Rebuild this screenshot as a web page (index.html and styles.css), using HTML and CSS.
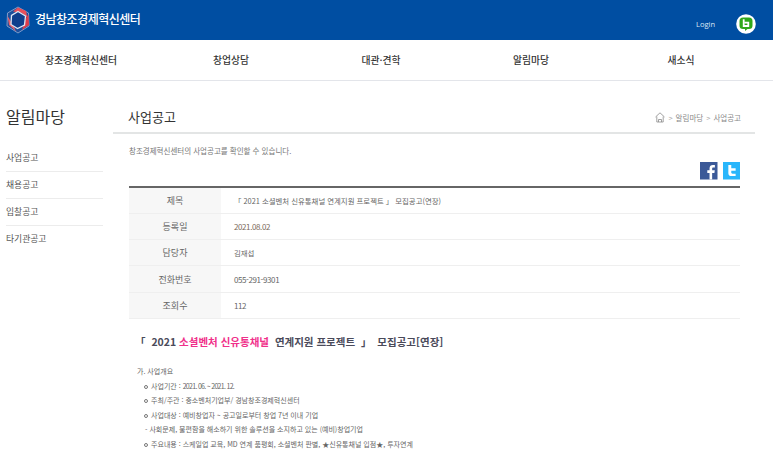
FILE: index.html
```html
<!DOCTYPE html>
<html lang="ko">
<head>
<meta charset="utf-8">
<title>사업공고</title>
<link rel="stylesheet" href="styles.css">
</head>
<body>
<header class="topbar">
  <a class="logo">
    <svg class="logo-mark" width="24" height="28" viewBox="0 0 24 28">
      <path d="M12 1 22.500 7 23 20 12 27 1 20 1.500 7Z" fill="#1b4f9c" stroke="#7f9ccb" stroke-width="1"/>
      <path d="M12 1.500 20 5 21.500 12 16 7 7 5.500Z" fill="#e8505b"/>
      <path d="M22.500 8 23 19 16 24 17.500 19 19.500 13Z" fill="#dc3c4a"/>
      <path d="M1.500 10 3 19 10 25.500 8 21 4 14Z" fill="#e8606a"/>
      <path d="M12 5.500 19.500 10 18.500 19 11.500 22.500 5 18.500 5.500 9.500Z" fill="#0f3f8c" stroke="#dfe6f4" stroke-width="1.300"/>
    </svg>
    <span class="logo-text">경남창조경제혁신센터</span>
  </a>
  <div class="top-right">
    <span class="login">Login</span>
    <svg class="band" width="20" height="20" viewBox="0 0 20 20">
      <circle cx="10" cy="10" r="9.800" fill="#fff"/>
      <path d="M7 3.500H13A3.500 3.500 0 0 1 16.500 7V11.500A3.500 3.500 0 0 1 13 15H11.500L9 17V15H7A3.500 3.500 0 0 1 3.500 11.500V7A3.500 3.500 0 0 1 7 3.500Z" fill="#2fa81a"/>
      <path d="M7.700 5.300V12H12.300V8.600H8.700" fill="none" stroke="#fff" stroke-width="1.800"/>
    </svg>
  </div>
</header>

<nav class="gnb">
  <a>창조경제혁신센터</a>
  <a>창업상담</a>
  <a>대관·견학</a>
  <a>알림마당</a>
  <a>새소식</a>
</nav>

<div class="wrap">
  <aside class="side">
    <h2 class="side-title">알림마당</h2>
    <ul class="side-menu">
      <li>사업공고</li>
      <li>채용공고</li>
      <li>입찰공고</li>
      <li>타기관공고</li>
    </ul>
  </aside>

  <main class="main">
    <div class="page-head">
      <h1>사업공고</h1>
      <div class="crumb">
        <svg width="10" height="11" viewBox="0 0 10 11"><path d="M.5 5 5 .8 9.500 5M1.800 4.500V10H8.200V4.500M3.500 10V7.500H6.500V10" fill="none" stroke="#8a8a8a" stroke-width=".8"/></svg>
        <span class="sep">&gt;</span><span>알림마당</span><span class="sep">&gt;</span><span>사업공고</span>
      </div>
    </div>

    <div class="content">
      <p class="intro">창조경제혁신센터의 사업공고를 확인할 수 있습니다.</p>
      <div class="share">
        <svg width="18" height="18" viewBox="0 0 18 18"><rect width="18" height="18" fill="#3b5998"/><path d="M12.500 18V11.200H14.800L15.200 8.500H12.500V6.900C12.500 6.100 12.800 5.600 13.900 5.600H15.300V3.200C14.800 3.100 14.200 3.100 13.300 3.100 11.200 3.100 9.800 4.300 9.800 6.600V8.500H7.500V11.200H9.800V18Z" fill="#fff"/></svg>
        <svg width="18" height="18" viewBox="0 0 18 18"><rect width="18" height="18" fill="#29b6fb"/><path d="M5.500 3H8.500V6.500H13V9H8.500V10.800C8.500 11.600 9 12 9.800 12H13V14.500H9C6.800 14.500 5.500 13.400 5.500 11.500Z" fill="#fff"/></svg>
      </div>

      <table class="info">
        <tr><th>제목</th><td>「 2021 소셜벤처 신유통채널 연계지원 프로젝트 」 모집공고(연장)</td></tr>
        <tr><th>등록일</th><td class="date"><span class="num">2021.08.02</span></td></tr>
        <tr><th>담당자</th><td>김재섭</td></tr>
        <tr><th>전화번호</th><td><span class="num">055-291-9301</span></td></tr>
        <tr><th>조회수</th><td><span class="num">112</span></td></tr>
      </table>

      <h3 class="notice-title">「&nbsp; 2021 <em>소셜벤처 신유통채널</em>&nbsp; 연계지원 프로젝트&nbsp; 」&nbsp; 모집공고[연장]</h3>

      <div class="notice-body">
        <p>가. 사업개요</p>
        <p class="in"><span class="bul"></span>사업기간 : <span class="tight">2021. 06. ~ 2021. 12.</span></p>
        <p class="in"><span class="bul"></span>주최/주관 : 중소벤처기업부/ 경남창조경제혁신센터</p>
        <p class="in"><span class="bul"></span>사업대상 : 예비창업자 ~ 공고일로부터 창업 7년 이내 기업</p>
        <p class="in dash">- 사회문제, 불편함을 해소하기 위한 솔루션을 소지하고 있는 (예비)창업기업</p>
        <p class="in"><span class="bul"></span>주요내용 : 스케일업 교육, MD 연계 품평회, 소셜벤처 판별, ★신유통채널 입점★, 투자연계</p>
      </div>
    </div>
  </main>
</div>
</body>
</html>
```

FILE: styles.css
```css
* { box-sizing: border-box; }
html, body { margin: 0; padding: 0; }
body {
  width: 773px;
  height: 455px;
  overflow: hidden;
  background: #fff;
  color: #555;
  font-family: "Noto Sans CJK KR", "Noto Sans", sans-serif;
}
p, h1, h2, h3, ul { margin: 0; padding: 0; }
ul { list-style: none; }

.topbar {
  height: 40px;
  background: #004ea2;
  display: flex;
  align-items: center;
  justify-content: space-between;
  padding: 0 17px 0 6px;
}
.logo { display: flex; align-items: center; gap: 5px; margin-top: -1px; }
.logo-mark { display: block; }
.logo-text {
  color: #fff;
  font-size: 12px;
  font-weight: 500;
  letter-spacing: -0.500px;
  white-space: nowrap;
  margin-top: -3px;
}
.top-right { display: flex; align-items: center; gap: 21px; margin-top: 8px; }
.login { color: #dde7f4; font-size: 7.500px; font-family: "Open Sans", sans-serif; }
.band { display: block; }

.gnb {
  height: 41px;
  padding-left: 6px;
  display: grid;
  grid-template-columns: repeat(5, 150px);
  align-items: center;
  border-bottom: 1px solid #e3e5ea;
}
.gnb a {
  text-align: center;
  font-size: 9.800px;
  font-weight: 500;
  color: #333;
}

.wrap { display: flex; padding-left: 6px; }
.side { width: 97px; padding-top: 24px; }
.side-title {
  font-size: 16px;
  font-weight: 400;
  line-height: 22px;
  color: #333;
}
.side-menu { margin-top: 18px; }
.side-menu li {
  height: 27px;
  line-height: 26px;
  font-size: 8.800px;
  color: #555;
  border-bottom: 1px solid #ececec;
}
.side-menu li:last-child { border-bottom: 0; }

.main { width: 642px; margin-left: 10px; }
.page-head {
  height: 53px;
  padding: 0 14px 0 15px;
  display: flex;
  align-items: center;
  justify-content: space-between;
  border-bottom: 2px solid #e3e5e5;
}
.page-head h1 { font-size: 13px; font-weight: 400; color: #333; padding-top: 19px; }
.crumb {
  display: flex;
  align-items: center;
  gap: 3px;
  font-size: 7.500px;
  color: #888;
  padding-top: 22px;
}
.crumb .sep { color: #aaa; }

.content { padding: 11px 15px 0 16px; }
.intro { font-size: 7.500px; line-height: 11px; color: #777; }
.share {
  display: flex;
  justify-content: flex-end;
  gap: 5px;
  margin-top: 6px;
  height: 24px;
}
.share svg { display: block; width: 17.500px; height: 17.500px; }

.info {
  width: 611px;
  border-collapse: collapse;
  border-top: 2px solid #666;
  font-size: 7.400px;
}
.info th {
  width: 92px;
  height: 26.300px;
  background: #f7f7f7;
  font-size: 9px;
  font-weight: 400;
  color: #666;
  border-bottom: 1px solid #efefef;
  padding: 0;
}
.info td {
  padding: 0 0 0 13px;
  color: #666;
  border-bottom: 1px solid #efefef;
}
.info .date { color: #7a6a5a; }
.num { font-size: 8px; letter-spacing: -0.400px; }

.notice-title {
  margin-top: 14px;
  padding-left: 6px;
  font-size: 10.500px;
  line-height: 17px;
  font-weight: 700;
  color: #4a4a5a;
  white-space: nowrap;
}
.notice-title em { font-style: normal; color: #f0308a; }

.notice-body { margin-top: 14px; padding-left: 8px; font-size: 7px; color: #666; }
.notice-body p { height: 14.600px; line-height: 14px; white-space: nowrap; }
.notice-body .in { padding-left: 7px; }
.notice-body .dash { padding-left: 8px; }
.bul {
  display: inline-block;
  width: 4px;
  height: 4px;
  margin-right: 3px;
  border: 0.800px solid #777;
  border-radius: 50%;
  vertical-align: 0;
}
.tight { letter-spacing: -0.700px; }
```
